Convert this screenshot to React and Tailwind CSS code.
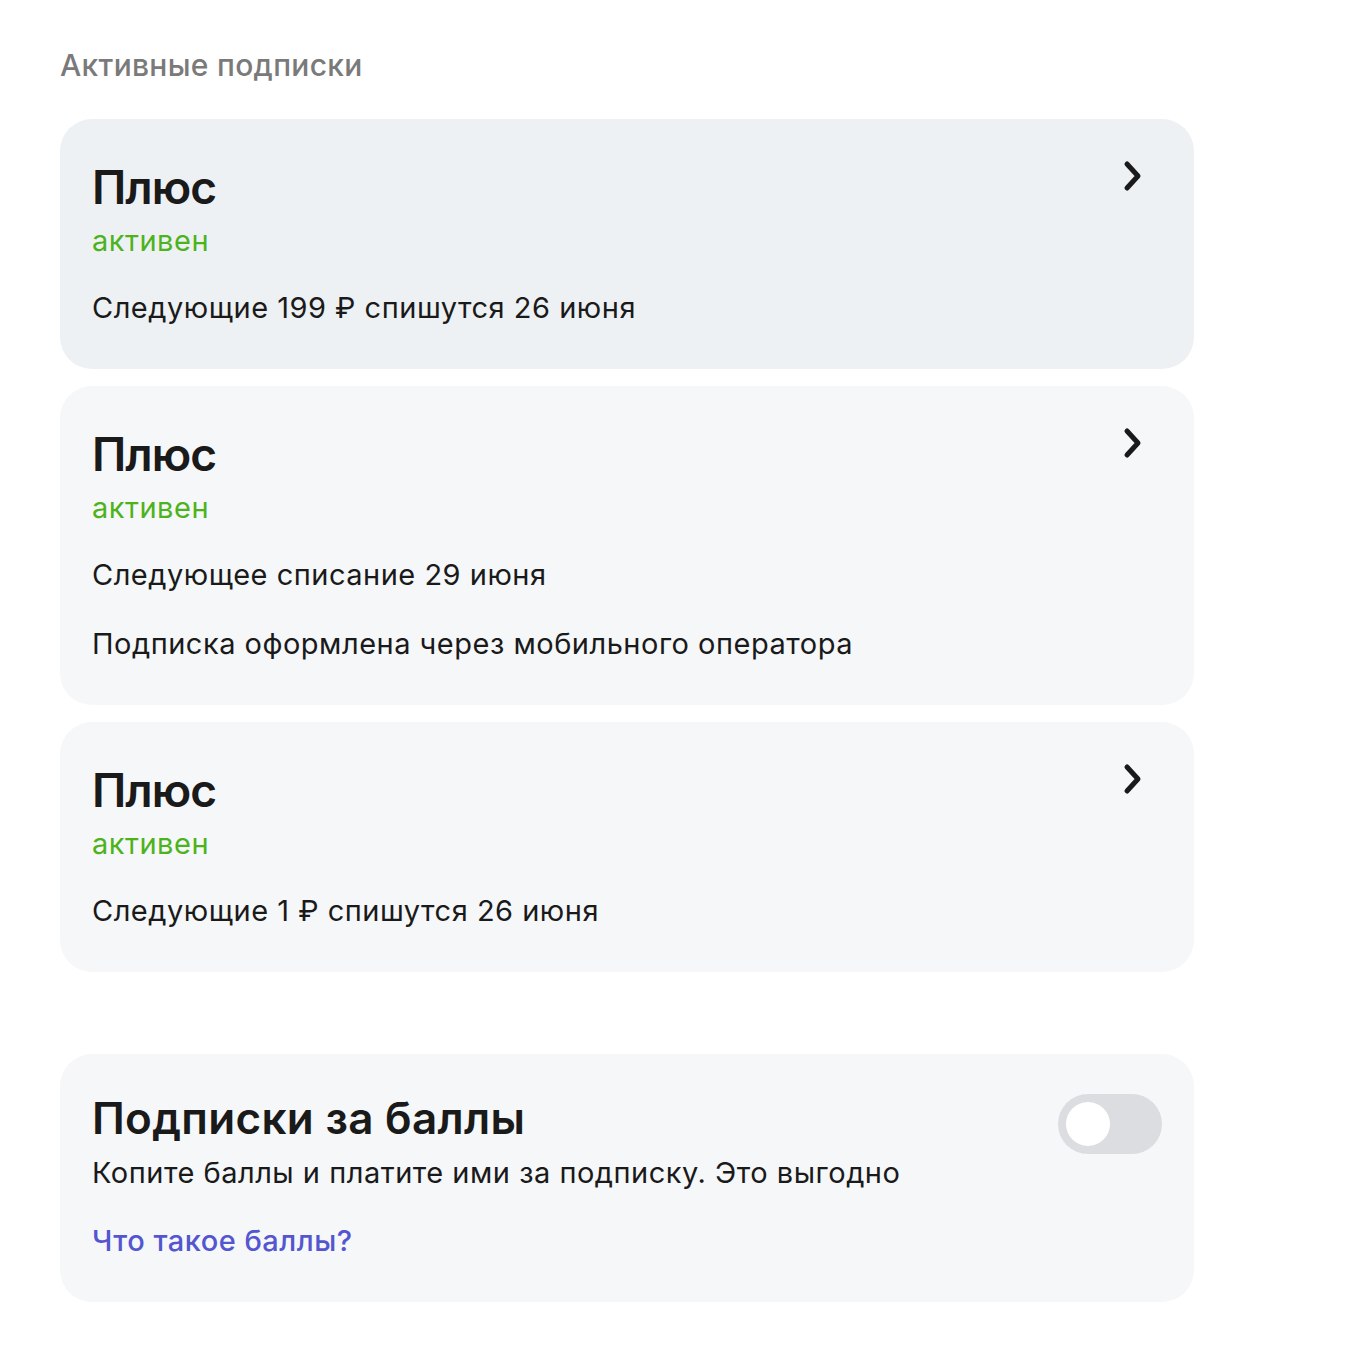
import React, { useState } from 'react';

const font = { fontFamily: 'Inter, "Noto Sans", sans-serif' };

function Chevron() {
    return (
        <svg width="22" height="34" viewBox="0 0 22 34" fill="none" className="shrink-0">
            <path d="M5 4 L16 16 L5 28" stroke="#1a1a1a" strokeWidth="5" strokeLinecap="round" strokeLinejoin="round" />
        </svg>
    );
}

function SubscriptionCard({ lines, highlighted }) {
    return (
        <div className={`flex justify-between rounded-[32px] pl-8 pr-[50px] pt-10 pb-[45px] ${highlighted ? 'bg-[#eef1f4]' : 'bg-[#f5f7f9]'}`}>
            <div className="flex flex-col">
                <h2 className="text-[46px] leading-[56px] font-semibold text-[#1a1a1a] tracking-[-1px]">Плюс</h2>
                <span className="mt-[10px] text-[29px] leading-[32px] tracking-[0.5px] text-[#4cb31c]">активен</span>
                <div className="mt-[35px] flex flex-col gap-[37px]">
                    {lines.map((line) => (
                        <p key={line} className="text-[29px] leading-[32px] tracking-[0.5px] text-[#1a1a1a]">{line}</p>
                    ))}
                </div>
            </div>
            <div className="pt-[1px]">
                <Chevron />
            </div>
        </div>
    );
}

function Toggle() {
    const [on, setOn] = useState(false);
    return (
        <button
            onClick={() => setOn(!on)}
            className={`shrink-0 flex items-center w-[104px] h-[60px] rounded-full p-2 ${on ? 'bg-[#4cb31c] justify-end' : 'bg-[#dcdde0] justify-start'}`}
        >
            <span className="block w-11 h-11 rounded-full bg-white" />
        </button>
    );
}

export default function App() {
    const subs = [
        { lines: ['Следующие 199 ₽ спишутся 26 июня'], highlighted: true },
        { lines: ['Следующее списание 29 июня', 'Подписка оформлена через мобильного оператора'] },
        { lines: ['Следующие 1 ₽ спишутся 26 июня'] },
    ];

    return (
        <div className="min-h-screen bg-white" style={font}>
            <div className="w-[1134px] ml-[60px] pt-[46px] pb-[52px]">
                <h1 className="text-[30px] leading-[38px] font-medium tracking-[0.3px] text-[#7a7a7a]">Активные подписки</h1>
                <div className="mt-[35px] flex flex-col gap-[17px]">
                    {subs.map((s, i) => (
                        <SubscriptionCard key={i} lines={s.lines} highlighted={s.highlighted} />
                    ))}
                </div>

                <div className="mt-[82px] flex justify-between rounded-[32px] bg-[#f5f7f9] pl-8 pr-8 pt-10 pb-[45px]">
                    <div className="flex flex-col">
                        <h2 className="text-[44px] leading-[52px] font-semibold tracking-[0.3px] text-[#1a1a1a] -mt-[2px]">Подписки за баллы</h2>
                        <p className="mt-[13px] text-[29px] leading-[32px] tracking-[0.5px] text-[#1a1a1a]">Копите баллы и платите ими за подписку. Это выгодно</p>
                        <a href="#" className="mt-9 text-[29px] leading-[32px] font-medium tracking-[0.5px] text-[#5356d0]">Что такое баллы?</a>
                    </div>
                    <Toggle />
                </div>
            </div>
        </div>
    );
}
